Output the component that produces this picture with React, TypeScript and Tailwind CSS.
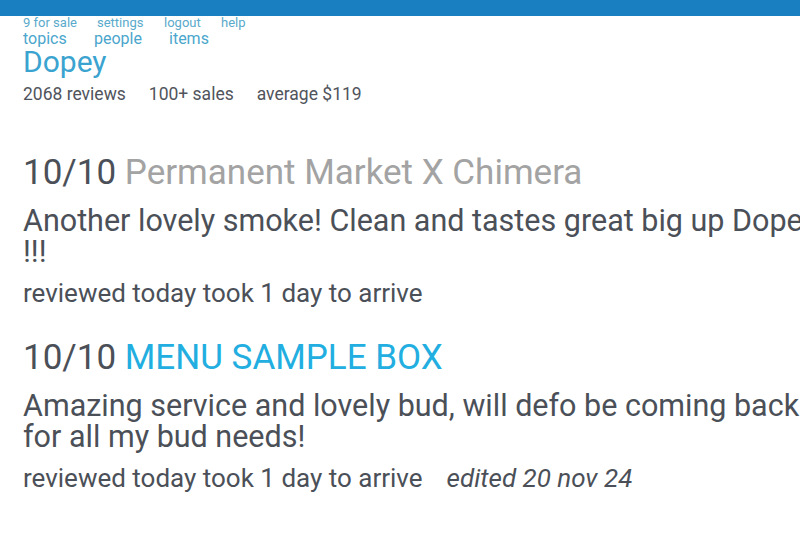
import React from "react";

const font = { fontFamily: "Roboto, 'Noto Sans', sans-serif" };

type Review = {
  product: string;
  productClass: string;
  body: string;
  edited?: string;
};

const reviews: Review[] = [
  {
    product: "Permanent Market X Chimera",
    productClass: "text-[#a3a3a3]",
    body: "Another lovely smoke! Clean and tastes great big up Dopey !!!",
  },
  {
    product: "MENU SAMPLE BOX",
    productClass: "text-[#22aee0]",
    body: "Amazing service and lovely bud, will defo be coming back for all my bud needs!",
    edited: "edited 20 nov 24",
  },
];

const ReviewItem = ({ r }: { r: Review }) => (
  <div className="mb-[30px]">
    <div className="whitespace-nowrap text-[35px] leading-[40px] text-[#4b5058]">
      10/10 <span className={r.productClass}>{r.product}</span>
    </div>
    <div className="mt-[12px] w-[815px] text-[30.5px] leading-[31px] text-[#4b5058]">{r.body}</div>
    <div className="mt-[11px] whitespace-nowrap text-[26px] leading-[30px] text-[#4b5058]">
      reviewed today took 1 day to arrive
      {r.edited && <span className="ml-[24px] italic">{r.edited}</span>}
    </div>
  </div>
);

export default function App() {
  return (
    <div className="h-[533px] w-[800px] overflow-hidden bg-white" style={font}>
      <div className="h-[16px] bg-[#1a7fc0]" />
      <div className="px-[23px]">
        <div className="flex text-[13px] leading-[14px] text-[#5aaacb]">
          <span className="w-[74px]">9 for sale</span>
          <span className="w-[67px]">settings</span>
          <span className="w-[57px]">logout</span>
          <span>help</span>
        </div>
        <div className="flex text-[16px] leading-[17px] text-[#4aa6cc]">
          <span className="w-[71px]">topics</span>
          <span className="w-[75px]">people</span>
          <span>items</span>
        </div>
        <div className="text-[30px] leading-[30px] text-[#3aa3cf]">Dopey</div>
        <div className="mt-[5px] flex gap-[23px] text-[17.5px] leading-[24px] text-[#50545c]">
          <span>2068 reviews</span>
          <span>100+ sales</span>
          <span>average $119</span>
        </div>
        <div className="mt-[47px]">
          {reviews.map((r) => (
            <ReviewItem key={r.product} r={r} />
          ))}
        </div>
      </div>
    </div>
  );
}
